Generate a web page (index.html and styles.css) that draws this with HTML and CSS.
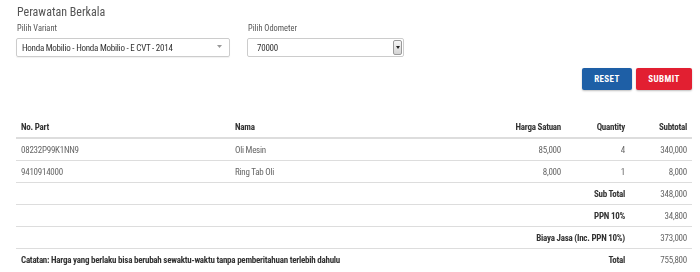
FILE: index.html
```
<!DOCTYPE html>
<html>
<head>
<meta charset="utf-8">
<link rel="stylesheet" href="styles.css">
</head>
<body>
<div class="page">
  <h1 class="title">Perawatan Berkala</h1>
  <div class="fields">
    <div class="field">
      <label class="label">Pilih Variant</label>
      <div class="select">
        <span class="select-text">Honda Mobilio - Honda Mobilio - E CVT - 2014</span>
        <svg class="caret" width="5" height="3" viewBox="0 0 5 3"><path d="M0 0 L5 0 L2.5 3 Z" fill="#999"/></svg>
      </div>
    </div>
    <div class="field">
      <label class="label">Pilih Odometer</label>
      <div class="odo">
        <span class="odo-text">70000</span>
        <span class="odo-btn"><svg width="4" height="3" viewBox="0 0 4 3"><path d="M0 0 L4 0 L2 3 Z" fill="#222"/></svg></span>
      </div>
    </div>
  </div>
  <div class="actions">
    <button class="btn btn-reset">RESET</button>
    <button class="btn btn-submit">SUBMIT</button>
  </div>
  <table class="parts">
    <colgroup>
      <col class="c1"><col class="c2"><col class="c3"><col class="c4"><col class="c5">
    </colgroup>
    <thead>
      <tr><th class="l">No. Part</th><th class="l">Nama</th><th class="r">Harga Satuan</th><th class="r">Quantity</th><th class="r">Subtotal</th></tr>
    </thead>
    <tbody>
      <tr><td>08232P99K1NN9</td><td>Oli Mesin</td><td class="r">85,000</td><td class="r">4</td><td class="r">340,000</td></tr>
      <tr><td>9410914000</td><td>Ring Tab Oli</td><td class="r">8,000</td><td class="r">1</td><td class="r">8,000</td></tr>
      <tr><td></td><td></td><td colspan="2" class="r b">Sub Total</td><td class="r">348,000</td></tr>
      <tr><td></td><td></td><td colspan="2" class="r b">PPN 10%</td><td class="r">34,800</td></tr>
      <tr><td></td><td></td><td colspan="2" class="r b">Biaya Jasa (Inc. PPN 10%)</td><td class="r">373,000</td></tr>
      <tr class="last"><td colspan="2" class="b">Catatan: Harga yang berlaku bisa berubah sewaktu-waktu tanpa pemberitahuan terlebih dahulu</td><td colspan="2" class="r b">Total</td><td class="r">755,800</td></tr>
    </tbody>
  </table>
</div>
</body>
</html>
```
FILE: styles.css
```
html, body { margin: 0; padding: 0; background: #fff; }
body {
  font-family: "Roboto Condensed", "Liberation Sans Narrow", Roboto, sans-serif;
  font-stretch: condensed;
  color: #555;
  font-size: 9px;
  -webkit-font-smoothing: antialiased;
}
.page { padding: 4px 8px 0 16px; width: 676px; display: flex; flex-direction: column; }
.title {
  margin: 0 0 0 1px; font-size: 12px; font-weight: 400; color: #555;
  line-height: 16px; height: 16px; filter: grayscale(1);
}
.fields { display: flex; gap: 17px; filter: grayscale(1); }
.field { display: flex; flex-direction: column; }
.label { font-size: 8.4px; color: #555; line-height: 11px; margin: 3px 0 4px 1px; }
.select {
  width: 214px; height: 19px; box-sizing: border-box;
  border: 1px solid #ccc; border-radius: 2px;
  display: flex; align-items: center; justify-content: space-between;
  padding: 0 7px 0 5px; color: #333; font-size: 9px; letter-spacing: -0.25px;
  box-shadow: 0 1px 1px rgba(0,0,0,0.06);
}
.caret { margin-top: -2px; }
.odo {
  width: 157px; height: 19px; box-sizing: border-box;
  border: 1px solid #ccc; border-radius: 2px;
  display: flex; align-items: center; justify-content: space-between;
  padding: 0 1px 0 9px; color: #333; font-size: 9px; letter-spacing: -0.25px;
}
.odo-btn {
  width: 9px; height: 15px; box-sizing: border-box;
  border: 1px solid #9a9a9a; border-radius: 2px;
  background: linear-gradient(#f6f6f6, #d4d4d4);
  display: flex; align-items: center; justify-content: center;
}
.actions { display: flex; justify-content: flex-end; gap: 4px; margin-top: 11px; }
.btn {
  height: 22px; border: none; border-radius: 2px; color: #fff;
  font-family: inherit; font-weight: 700; font-size: 9px; letter-spacing: 0.4px;
  padding: 0; box-shadow: 0 1px 2px rgba(0,0,0,0.25);
}
.btn-reset { background: #1e5fa6; width: 50px; }
.btn-submit { background: #e21f31; width: 56px; }
.parts { width: 676px; border-collapse: collapse; margin-top: 27px; table-layout: fixed; filter: grayscale(1); }
.c1 { width: 214px; } .c2 { width: 196px; } .c3 { width: 140px; } .c4 { width: 64px; } .c5 { width: 62px; }
th, td { padding: 0 5px; font-size: 9px; white-space: nowrap; letter-spacing: -0.25px; }
th { font-weight: 700; color: #333; height: 20px; border-bottom: 2px solid #ddd; }
td { height: 21px; border-bottom: 1px solid #ddd; color: #666; }
.l { text-align: left; }
.r { text-align: right; }
td.b { font-weight: 700; color: #333; }
.last td { border-bottom: none; }
```
